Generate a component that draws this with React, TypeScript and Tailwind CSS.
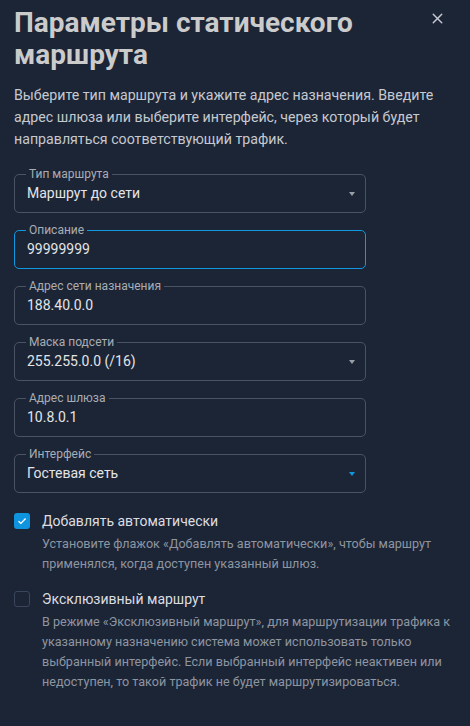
import { X } from 'lucide-react'

interface Field {
  label: string
  value: string
  select?: boolean
  focused?: boolean
  accent?: boolean
}

const fields: Field[] = [
  { label: 'Тип маршрута', value: 'Маршрут до сети', select: true },
  { label: 'Описание', value: '99999999', focused: true },
  { label: 'Адрес сети назначения', value: '188.40.0.0' },
  { label: 'Маска подсети', value: '255.255.0.0 (/16)', select: true },
  { label: 'Адрес шлюза', value: '10.8.0.1' },
  { label: 'Интерфейс', value: 'Гостевая сеть', select: true, accent: true },
]

function OutlinedField({ field }: { field: Field }) {
  return (
    <div
      className={`relative flex h-[39px] w-[352px] items-center rounded-[5px] border pl-[12px] pr-[10px] ${
        field.focused ? 'border-[#1196e0]' : 'border-[#4b5261]'
      }`}
    >
      <span className="absolute -top-[8px] left-[11px] bg-[#1c2536] px-[3px] text-[12px] leading-[14px] text-[#a9adb4]">
        {field.label}
      </span>
      <span className="flex-1 text-[14px] text-[#e3e4e6]">{field.value}</span>
      {field.select && (
        <svg width="6" height="4" viewBox="0 0 6 4">
          <path d="M0 0h6L3 4z" fill={field.accent ? '#1196e0' : '#9a9ea6'} />
        </svg>
      )}
    </div>
  )
}

function Check({ checked }: { checked: boolean }) {
  return checked ? (
    <div className="flex h-[16px] w-[16px] shrink-0 items-center justify-center rounded-[3px] bg-[#0f95e0]">
      <svg width="10" height="8" viewBox="0 0 10 8">
        <path d="M1.5 4.2 3.9 6.4 8.6 1.6" fill="none" stroke="#fff" strokeWidth="1.4" />
      </svg>
    </div>
  ) : (
    <div className="h-[16px] w-[16px] shrink-0 rounded-[3px] border-[1.5px] border-[#3a465c]" />
  )
}

export default function App() {
  return (
    <div className="min-h-[726px] w-[470px] bg-[#1c2536] px-[14px] pt-[7px] font-['Roboto','Liberation_Sans',sans-serif]">
      <div className="flex items-start justify-between">
        <h1 className="text-[28px] font-bold leading-[32px] text-[#cbcbcb]">
          Параметры статического маршрута
        </h1>
        <button className="mr-[10px] mt-[3px] text-[#c7cad0]">
          <X size={17} strokeWidth={2} />
        </button>
      </div>

      <p className="mt-[13px] text-[14.2px] leading-[22px] text-[#c6c9cf]">
        Выберите тип маршрута и укажите адрес назначения. Введите адрес шлюза или выберите интерфейс, через который будет
        направляться соответствующий трафик.
      </p>

      <div className="mt-[24px] flex flex-col gap-[17px]">
        {fields.map((f) => (
          <OutlinedField key={f.label} field={f} />
        ))}
      </div>

      <div className="mt-[20px] flex gap-[12px]">
        <Check checked />
        <div>
          <div className="text-[14px] leading-[16px] text-[#dcdde0]">Добавлять автоматически</div>
          <p className="mt-[5px] text-[12.6px] leading-[20px] text-[#8e95a1]">
            Установите флажок «Добавлять автоматически», чтобы маршрут применялся, когда доступен указанный шлюз.
          </p>
        </div>
      </div>

      <div className="mt-[17px] flex gap-[12px]">
        <Check checked={false} />
        <div>
          <div className="text-[14px] leading-[16px] text-[#dcdde0]">Эксклюзивный маршрут</div>
          <p className="mt-[5px] text-[12.6px] leading-[20px] text-[#8e95a1]">
            В режиме «Эксклюзивный маршрут», для маршрутизации трафика к указанному назначению система может использовать только
            выбранный интерфейс. Если выбранный интерфейс неактивен или недоступен, то такой трафик не будет маршрутизироваться.
          </p>
        </div>
      </div>
    </div>
  )
}
